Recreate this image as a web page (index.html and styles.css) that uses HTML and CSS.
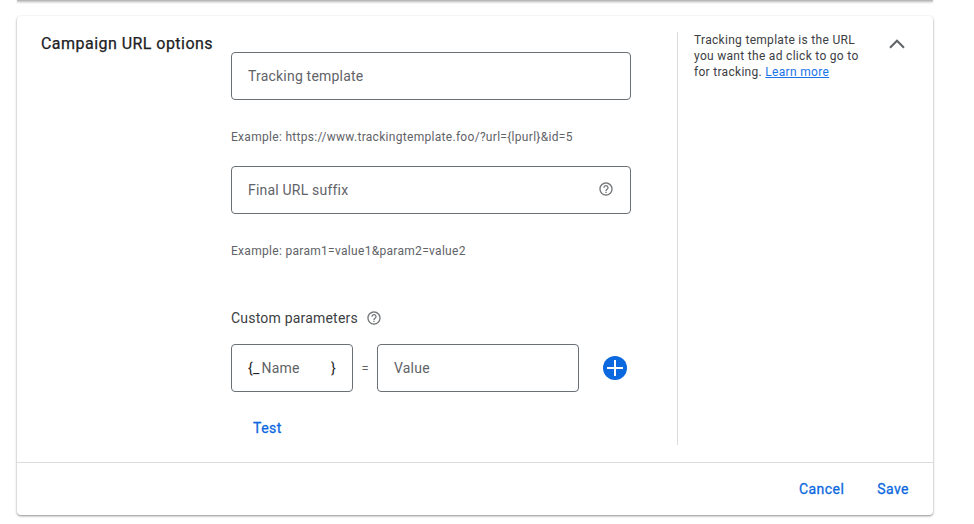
FILE: index.html
```html
<!DOCTYPE html>
<html lang="en">
<head>
<meta charset="utf-8">
<title>Campaign URL options</title>
<link rel="stylesheet" href="styles.css">
</head>
<body>
<div class="previous-card"></div>
<section class="card">
  <div class="card-body">
    <h2 class="title">Campaign URL options</h2>
    <div class="form">
      <div class="field"><span>Tracking template</span></div>
      <p class="hint">Example: https://www.trackingtemplate.foo/?url={lpurl}&amp;id=5</p>
      <div class="field">
        <span>Final URL suffix</span>
        <svg class="help-icon" viewBox="0 0 24 24"><path d="M11 18h2v-2h-2v2zm1-16C6.480 2 2 6.480 2 12s4.480 10 10 10 10-4.480 10-10S17.520 2 12 2zm0 18c-4.410 0-8-3.590-8-8s3.590-8 8-8 8 3.590 8 8-3.590 8-8 8zm0-14c-2.210 0-4 1.790-4 4h2c0-1.100.9-2 2-2s2 .9 2 2c0 2-3 1.750-3 5h2c0-2.250 3-2.500 3-5 0-2.210-1.790-4-4-4z"/></svg>
      </div>
      <p class="hint">Example: param1=value1&amp;param2=value2</p>
      <div class="params-label">
        <span>Custom parameters</span>
        <svg class="help-icon" viewBox="0 0 24 24"><path d="M11 18h2v-2h-2v2zm1-16C6.480 2 2 6.480 2 12s4.480 10 10 10 10-4.480 10-10S17.520 2 12 2zm0 18c-4.410 0-8-3.590-8-8s3.590-8 8-8 8 3.590 8 8-3.590 8-8 8zm0-14c-2.210 0-4 1.790-4 4h2c0-1.100.9-2 2-2s2 .9 2 2c0 2-3 1.750-3 5h2c0-2.250 3-2.500 3-5 0-2.210-1.790-4-4-4z"/></svg>
      </div>
      <div class="params">
        <div class="field name"><span class="brace open">{_</span><span>Name</span><span class="brace close">}</span></div>
        <span class="equals">=</span>
        <div class="field value"><span>Value</span></div>
        <svg class="add" viewBox="0 0 24 24"><circle cx="12" cy="12" r="12"/><path d="M12 4v16M4 12h16"/></svg>
      </div>
      <a class="action test">Test</a>
    </div>
    <aside class="help">
      <p>Tracking template is the URL<br>you want the ad click to go to<br>for tracking. <a class="learn">Learn more</a></p>
      <svg class="chevron" viewBox="0 0 16 10"><path d="M1 8.700 8 1.700l7 7"/></svg>
    </aside>
  </div>
  <footer class="card-footer"><a class="action">Cancel</a><a class="action">Save</a></footer>
</section>
</body>
</html>
```
FILE: styles.css
```css
* { box-sizing: border-box; }
body {
  margin: 0;
  height: 524px;
  overflow: hidden;
  background: #fff;
  font-family: Roboto, "Liberation Sans", sans-serif;
  color: #3c4043;
}
p, h2 { margin: 0; }
.previous-card, .card {
  width: 916px;
  margin-left: 17px;
  box-shadow: 0 1px 2px rgba(0, 0, 0, .3), 0 1px 3px rgba(0, 0, 0, .18);
}
.previous-card { height: 1px; background: #b8b8b8; }
.card {
  height: 499px;
  margin-top: 15px;
  border-radius: 4px;
  background: #fff;
}
.card-body { display: flex; height: 446px; padding: 16px 24px 17px; }
.title {
  width: 190px;
  flex: none;
  font-size: 16px;
  line-height: 24px;
  font-weight: 400;
  letter-spacing: .46px;
  color: #202124;
  -webkit-text-stroke: .25px #202124;
}
.form { width: 446px; flex: none; padding-top: 20px; }
.field {
  display: flex;
  align-items: center;
  width: 400px;
  height: 48px;
  padding: 0 16px;
  border: 1px solid #6b7075;
  border-radius: 4px;
  font-size: 14px;
  letter-spacing: .2px;
  color: #5f6368;
}
.help-icon { width: 16px; height: 16px; fill: #747779; }
.field .help-icon { margin: -2px 0 0 auto; }
.hint {
  height: 66px;
  padding-top: 29px;
  font-size: 12px;
  line-height: 16px;
  letter-spacing: .3px;
  color: #5f6368;
}
.params-label {
  display: flex;
  align-items: center;
  gap: 8px;
  height: 20px;
  margin-top: 28px;
  font-size: 14px;
  letter-spacing: .2px;
}
.params { display: flex; align-items: center; margin-top: 16px; }
.name { width: 122px; }
.brace { color: #202124; }
.open { margin-right: 2px; }
.close { margin-left: auto; }
.equals { width: 24px; text-align: center; font-size: 13px; color: #5f6368; }
.value { width: 202px; }
.add { width: 24px; height: 24px; margin-left: 24px; fill: #0b68de; }
.add path { fill: none; stroke: #fff; stroke-width: 2; }
.action {
  font-size: 14px;
  font-weight: 400;
  line-height: 20px;
  letter-spacing: .45px;
  color: #0b68de;
  -webkit-text-stroke: .3px #0b68de;
}
.test { display: block; margin: 26px 0 0 22px; }
.help {
  display: flex;
  align-items: flex-start;
  justify-content: space-between;
  flex: 1;
  padding-left: 16px;
  border-left: 1px solid #dadce0;
  font-size: 12px;
  line-height: 16px;
  letter-spacing: .3px;
  white-space: nowrap;
}
.learn { color: #1a73e8; text-decoration: underline; }
.chevron { width: 16px; height: 10px; margin: 7px 4px 0 0; fill: none; stroke: #5f6368; stroke-width: 2; }
.card-footer {
  display: flex;
  align-items: center;
  justify-content: flex-end;
  gap: 33px;
  height: 53px;
  padding-right: 24px;
  border-top: 1px solid #dadce0;
}
```
